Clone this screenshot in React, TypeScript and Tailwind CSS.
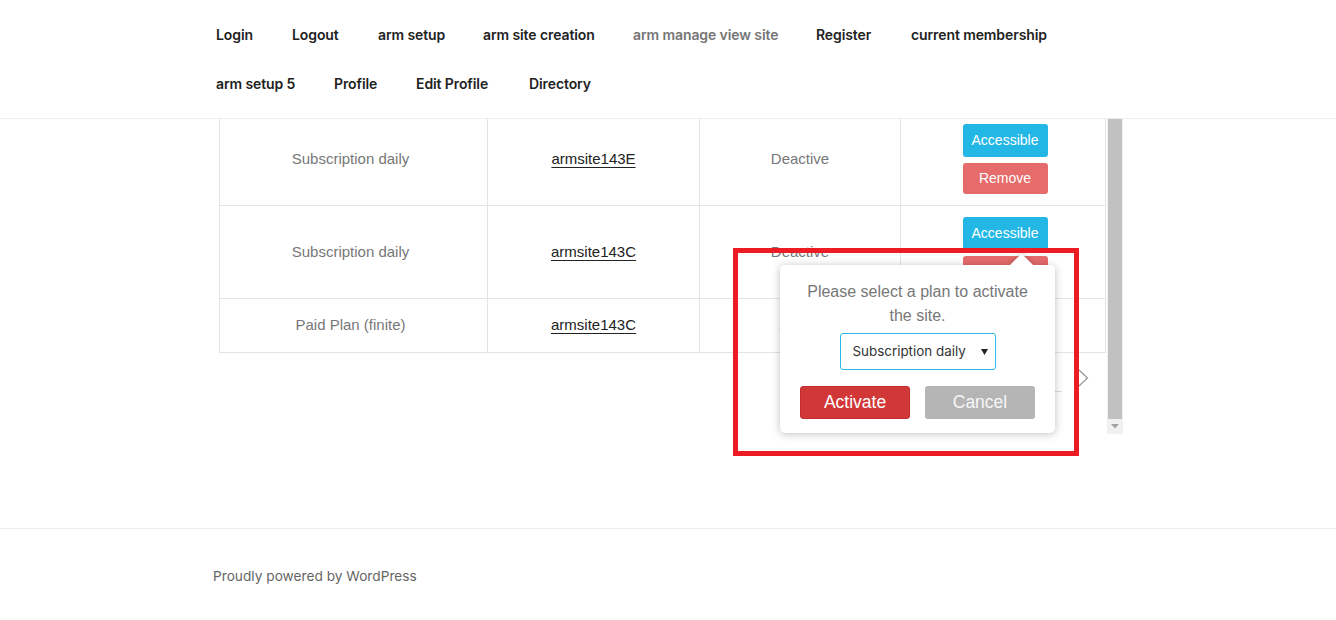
import React from "react";

const navFont = { fontFamily: "Inter, 'Noto Sans', sans-serif" };

const row1 = [
  { t: "Login", w: "w-[38px]" },
  { t: "Logout", w: "w-[48px]" },
  { t: "arm setup", w: "w-[67px]" },
  { t: "arm site creation", w: "w-[112px]" },
  { t: "arm manage view site", w: "w-[145px]", active: true },
  { t: "Register", w: "w-[57px]" },
  { t: "current membership", w: "w-[136px]" },
];
const row2 = [
  { t: "arm setup 5", w: "w-[80px]" },
  { t: "Profile", w: "w-[44px]" },
  { t: "Edit Profile", w: "w-[75px]" },
  { t: "Directory", w: "w-[62px]" },
];

function NavRow({ items }: { items: { t: string; w: string; active?: boolean }[] }) {
  return (
    <div className="flex h-[49px] items-center gap-[38px]">
      {items.map((i) => (
        <a
          key={i.t}
          className={`${i.w} shrink-0 whitespace-nowrap text-[14px] font-semibold tracking-[-0.1px] ${
            i.active ? "text-[#767676]" : "text-[#222222]"
          }`}
        >
          {i.t}
        </a>
      ))}
    </div>
  );
}

function Cell({ children, w, first }: { children?: React.ReactNode; w: string; first?: boolean }) {
  return (
    <div
      className={`${w} flex shrink-0 items-center justify-center border-b border-r border-[#dfe5e8] ${
        first ? "border-l pr-[6px]" : ""
      }`}
    >
      {children}
    </div>
  );
}

function Buttons() {
  return (
    <div className="flex flex-col gap-[6px] pl-[4px]">
      <button className="h-[33px] w-[85px] rounded-[3px] bg-[#23b7e5] text-[14px] text-white">Accessible</button>
      <button className="h-[31px] w-[85px] rounded-[3px] bg-[#e66b6b] text-[14px] text-white">Remove</button>
    </div>
  );
}

function Row({
  plan,
  site,
  status,
  h,
  buttons,
  extra,
}: {
  plan: string;
  site: string;
  status: string;
  h: string;
  buttons?: boolean;
  extra?: string;
}) {
  return (
    <div className={`flex shrink-0 ${h} ${extra ?? ""}`}>
      <Cell w="w-[269px]" first>
        <span className="text-[15px] text-[#777777]">{plan}</span>
      </Cell>
      <Cell w="w-[212px]">
        <a className="text-[15px] text-[#222222] underline underline-offset-[3px]">{site}</a>
      </Cell>
      <Cell w="w-[201px]">
        <span className="text-[15px] text-[#777777]">{status}</span>
      </Cell>
      <Cell w="w-[205px]">{buttons ? <Buttons /> : null}</Cell>
    </div>
  );
}

export default function App() {
  return (
    <div
      className="relative h-[620px] w-[1336px] overflow-hidden bg-white"
      style={{ fontFamily: "'Liberation Sans', Arial, sans-serif" }}
    >
      {/* header */}
      <header className="h-[119px] border-b border-[#eeeeee] pl-[216px] pt-[10px]" style={navFont}>
        <NavRow items={row1} />
        <NavRow items={row2} />
      </header>

      {/* content */}
      <div className="flex h-[409px] pl-[219px]">
        <div className="flex h-[315px] w-[904px]">
          <div className="flex w-[887px] flex-col overflow-hidden">
            <Row plan="Subscription daily" site="armsite143E" status="Deactive" h="h-[93px]" buttons extra="-mt-[6px]" />
            <Row plan="Subscription daily" site="armsite143C" status="Deactive" h="h-[93px]" buttons />
            <Row plan="Paid Plan (finite)" site="armsite143C" status="Active" h="h-[54px]" />
            <div className="mt-[16px] flex items-start justify-end pr-[17px]">
              <div className="mr-[16px] h-[23px] w-[40px] border-b border-[#dddddd]" />
              <svg width="11" height="18" viewBox="0 0 11 18" fill="none">
                <path d="M1 1 L9.5 9 L1 17" stroke="#9a9a9a" strokeWidth="1.3" />
              </svg>
            </div>
          </div>
          <div className="ml-[1px] flex w-[16px] flex-col bg-[#f1f1f1]">
            <div className="mx-[1px] h-[300px] bg-[#c1c1c1]" />
            <div className="flex flex-1 items-center justify-center">
              <svg width="8" height="5" viewBox="0 0 8 5">
                <path d="M0 0 L8 0 L4 4.5 Z" fill="#a3a3a3" />
              </svg>
            </div>
          </div>
        </div>
      </div>

      {/* footer */}
      <footer className="border-t border-[#eeeeee] pl-[213px] pt-[37px]" style={navFont}>
        <p className="text-[13.7px] text-[#666666]">Proudly powered by WordPress</p>
      </footer>

      {/* popup */}
      <div className="absolute left-[780px] top-[265px] h-[168px] w-[275px] rounded-[5px] bg-white shadow-[0_1px_8px_rgba(0,0,0,0.25)]">
        <div className="absolute left-[233px] top-[-8px] h-[17px] w-[17px] rotate-45 bg-white shadow-[-2px_-2px_4px_rgba(0,0,0,0.12)]" />
        <div className="relative flex flex-col items-center rounded-[5px] bg-white px-[20px] pt-[15px]">
          <p className="text-center text-[16px] leading-[24px] text-[#777777]">
            Please select a plan to activate the site.
          </p>
          <div
            className="mt-[5px] flex h-[37px] w-[156px] items-center justify-between rounded-[3px] border border-[#2bb8e6] pl-[12px] pr-[7px] text-[13.4px] text-[#333333]"
            style={navFont}
          >
            <span className="whitespace-nowrap">Subscription daily</span>
            <svg width="7" height="6" viewBox="0 0 7 6">
              <path d="M0 0 L7 0 L3.5 6 Z" fill="#222222" />
            </svg>
          </div>
          <div className="mt-[16px] flex w-full justify-between">
            <button className="h-[33px] w-[110px] rounded-[3px] border border-[#c43030] bg-[#d13737] text-[17.5px] text-white">
              Activate
            </button>
            <button className="h-[33px] w-[110px] rounded-[3px] bg-[#b5b5b5] text-[17.5px] text-[#f7f7f7]">
              Cancel
            </button>
          </div>
        </div>
      </div>

      {/* red highlight box */}
      <div className="pointer-events-none absolute left-[733px] top-[248px] h-[208px] w-[346px] border-[5px] border-[#ed1c24]" />
    </div>
  );
}
